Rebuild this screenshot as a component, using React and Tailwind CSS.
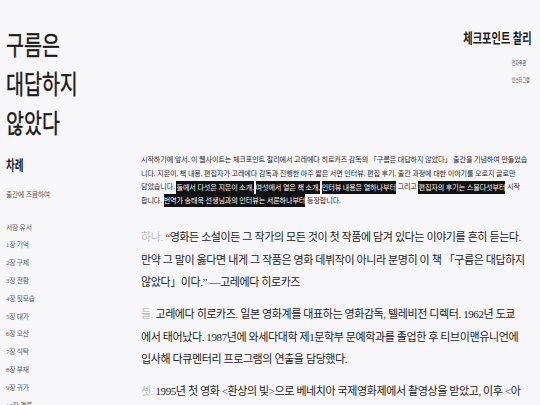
export default function App() {
  const chapters = [
    "서장 유서",
    "1장 기억",
    "2장 구제",
    "3장 전환",
    "4장 뒷모습",
    "5장 대가",
    "6장 오산",
    "7장 식탁",
    "8장 부재",
    "9장 귀가",
    "10장 결론",
  ];
  const hl = "bg-[#111] text-white py-[2.5px]";
  const big = "text-[11px] leading-[22.5px] tracking-[-0.4px] text-[#222] whitespace-nowrap";
  return (
    <div className="h-[405px] w-[540px] overflow-hidden bg-[#f7f7f9] text-[#1f1f1f] flex font-['Liberation_Serif','Noto_Sans_CJK_KR',serif]">
      <aside className="w-[141px] shrink-0 pl-[6px] pt-[27px]">
        <div className="origin-left scale-x-[0.75] text-[26px] leading-[39px] text-[#1a1a1a] [-webkit-text-stroke:0.45px_#1a1a1a] whitespace-nowrap">
          구름은
          <br />
          대답하지
          <br />
          않았다
        </div>
        <div className="mt-[12px] origin-left scale-x-[0.68] text-[14px] leading-[20px] font-bold text-[#1a1a1a] whitespace-nowrap">
          차례
        </div>
        <div className="mt-[12.6px] text-[6.8px] leading-[12px] tracking-[-0.2px] text-[#555] whitespace-nowrap">
          출간에 즈음하여
        </div>
        <ul className="mt-[18px] text-[6.8px] leading-[17.8px] tracking-[-0.2px] text-[#555] whitespace-nowrap">
          {chapters.map((c) => (
            <li key={c}>{c}</li>
          ))}
        </ul>
      </aside>
      <main className="flex-1 pr-[8px] pt-[29px]">
        <header className="flex flex-col items-end">
          <div className="origin-right scale-x-[0.73] text-[14px] leading-[20px] font-bold text-[#1a1a1a] whitespace-nowrap">
            체크포인트 찰리
          </div>
          <div className="mt-[5.6px] mr-[2px] origin-right scale-x-[0.65] text-[6px] leading-[17px] text-[#444] whitespace-nowrap">
            <div>전자우편</div>
            <div>인스타그램</div>
          </div>
        </header>
        <p className="mt-[65.5px] text-[7.1px] leading-[13.5px] tracking-[-0.1px] text-[#222] whitespace-nowrap">
          시작하기에 앞서. 이 웹사이트는 체크포인트 찰리에서 고레에다 히로카즈 감독의 「구름은 대답하지 않았다」 출간을 기념하여 만들었습
          <br />
          니다. 지은이, 책 내용, 편집자가 고레에다 감독과 진행한 아주 짧은 서면 인터뷰, 편집 후기, 출간 과정에 대한 이야기를 오로지 글로만
          <br />
          담았습니다. <span className={hl}>둘에서 다섯은 지은이 소개,</span>{" "}
          <span className={hl}>여섯에서 열은 책 소개,</span>{" "}
          <span className={hl}>인터뷰 내용은 열하나부터</span> 그리고{" "}
          <span className={hl}>편집자의 후기는 스물다섯부터</span> 시작
          <br />
          합니다. <span className={hl}>번역가 송태욱 선생님과의 인터뷰는 서른하나부터</span> 등장합니다.
        </p>
        <p className={"mt-[18px] " + big}>
          <span className="text-[#bdbdbd]">하나.</span> “영화든 소설이든 그 작가의 모든 것이 첫 작품에 담겨 있다는 이야기를 흔히 듣는다.
          <br />
          만약 그 말이 옳다면 내게 그 작품은 영화 데뷔작이 아니라 분명히 이 책 「구름은 대답하지
          <br />
          않았다」이다.” —고레에다 히로카즈
        </p>
        <p className={"mt-[9.5px] " + big}>
          <span className="text-[#bdbdbd]">둘.</span> 고레에다 히로카즈. 일본 영화계를 대표하는 영화감독, 텔레비전 디렉터. 1962년 도쿄
          <br />
          에서 태어났다. 1987년에 와세다대학 제1문학부 문예학과를 졸업한 후 티브이맨유니언에
          <br />
          입사해 다큐멘터리 프로그램의 연출을 담당했다.
        </p>
        <p className={"mt-[9.5px] " + big}>
          <span className="text-[#bdbdbd]">셋.</span> 1995년 첫 영화 &lt;환상의 빛&gt;으로 베네치아 국제영화제에서 촬영상을 받았고, 이후 &lt;아
        </p>
      </main>
    </div>
  );
}
